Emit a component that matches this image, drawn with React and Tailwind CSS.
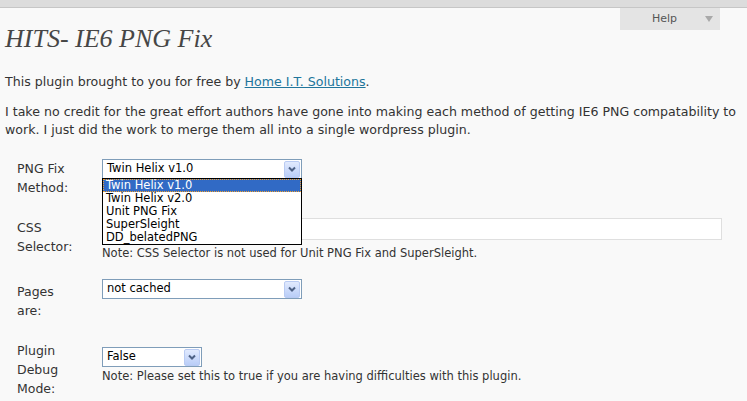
import React from "react";

const sans = { fontFamily: '"DejaVu Sans", Verdana, sans-serif' };

function Chevron() {
  return (
    <span className="flex h-[17px] w-[16px] items-center justify-center rounded-[2px] border border-[#b9cbf3] bg-gradient-to-b from-[#e1eafe] to-[#b9cdf7]">
      <svg width="8" height="6" viewBox="0 0 8 6">
        <path d="M1 1.5 L4 4.5 L7 1.5" fill="none" stroke="#4d6185" strokeWidth="2" />
      </svg>
    </span>
  );
}

function FakeSelect({ value, width }) {
  return (
    <div
      className={`flex h-[20px] items-center justify-between border border-[#7f9db9] bg-white pl-[4px] pr-[1px] text-[11.5px] text-black ${width}`}
    >
      <span>{value}</span>
      <Chevron />
    </div>
  );
}

function Label({ lines, className }) {
  return (
    <div className={`w-[102px] shrink-0 pl-[17px] text-[12.5px] leading-[19px] text-[#333] ${className}`}>
      {lines.map((l) => (
        <div key={l}>{l}</div>
      ))}
    </div>
  );
}

const options = ["Twin Helix v1.0", "Twin Helix v2.0", "Unit PNG Fix", "SuperSleight", "DD_belatedPNG"];

export default function App() {
  return (
    <div className="h-[401px] w-[747px] overflow-hidden bg-[#f9f9f9]" style={sans}>
      <div className="h-[8px] border-b border-[#c6c6c6] bg-[#dcdcdc]" />
      <div className="flex justify-end pr-[27px]">
        <div className="flex h-[22px] w-[100px] items-center bg-[#e4e4e4] text-[11px] text-[#555]">
          <span className="ml-[32px]">Help</span>
          <svg className="ml-auto mr-[7px]" width="8" height="6" viewBox="0 0 8 6">
            <path d="M0 0 H8 L4 6 Z" fill="#a9a9a9" />
          </svg>
        </div>
      </div>

      <div className="pl-[5px]">
        <h2
          className="-mt-[6px] text-[26px] italic leading-[30px] text-[#464646]"
          style={{ fontFamily: '"Liberation Serif", Georgia, serif' }}
        >
          HITS- IE6 PNG Fix
        </h2>
        <p className="mt-[19px] text-[12.6px] leading-[18px] text-[#333]">
          This plugin brought to you for free by{" "}
          <a href="#" className="text-[#21759b] underline">
            Home I.T. Solutions
          </a>
          .
        </p>
        <p className="mt-[12px] pr-[8px] text-[12.6px] leading-[18px] text-[#333]">
          I take no credit for the great effort authors have gone into making each method of getting IE6 PNG
          compatability to work. I just did the work to merge them all into a single wordpress plugin.
        </p>
      </div>

      <div className="mt-[20px] flex flex-col">
        <div className="flex items-start">
          <Label lines={["PNG Fix", "Method:"]} />
          <div className="relative">
            <FakeSelect value="Twin Helix v1.0" width="w-[200px]" />
            <div className="absolute left-0 top-[19px] z-10 w-[200px] border border-black bg-white text-[11.5px] leading-[13px] text-black">
              {options.map((o, i) =>
                i === 0 ? (
                  <div
                    key={o}
                    className="h-[13px] border border-dotted border-[#f0a030] bg-[#316ac5] pl-[2px] leading-[11px] text-white"
                  >
                    {o}
                  </div>
                ) : (
                  <div key={o} className="h-[13px] pl-[3px]">
                    {o}
                  </div>
                )
              )}
            </div>
          </div>
        </div>

        <div className="mt-[21px] flex items-start">
          <Label lines={["CSS", "Selector:"]} />
          <div className="flex flex-col">
            <div className="h-[22px] w-[620px] border border-[#dfdfdf] bg-white" />
            <div className="mt-[6px] text-[11.5px] leading-[14px] text-[#333]">
              Note: CSS Selector is not used for Unit PNG Fix and SuperSleight.
            </div>
          </div>
        </div>

        <div className="mt-[19px] flex items-start">
          <Label lines={["Pages", "are:"]} className="mt-[3px]" />
          <FakeSelect value="not cached" width="w-[200px]" />
        </div>

        <div className="mt-[21px] flex items-start">
          <Label lines={["Plugin", "Debug", "Mode:"]} />
          <div className="mt-[6px] flex flex-col">
            <FakeSelect value="False" width="w-[100px]" />
            <div className="mt-[2px] text-[11.5px] leading-[14px] text-[#333]">
              Note: Please set this to true if you are having difficulties with this plugin.
            </div>
          </div>
        </div>
      </div>
    </div>
  );
}
